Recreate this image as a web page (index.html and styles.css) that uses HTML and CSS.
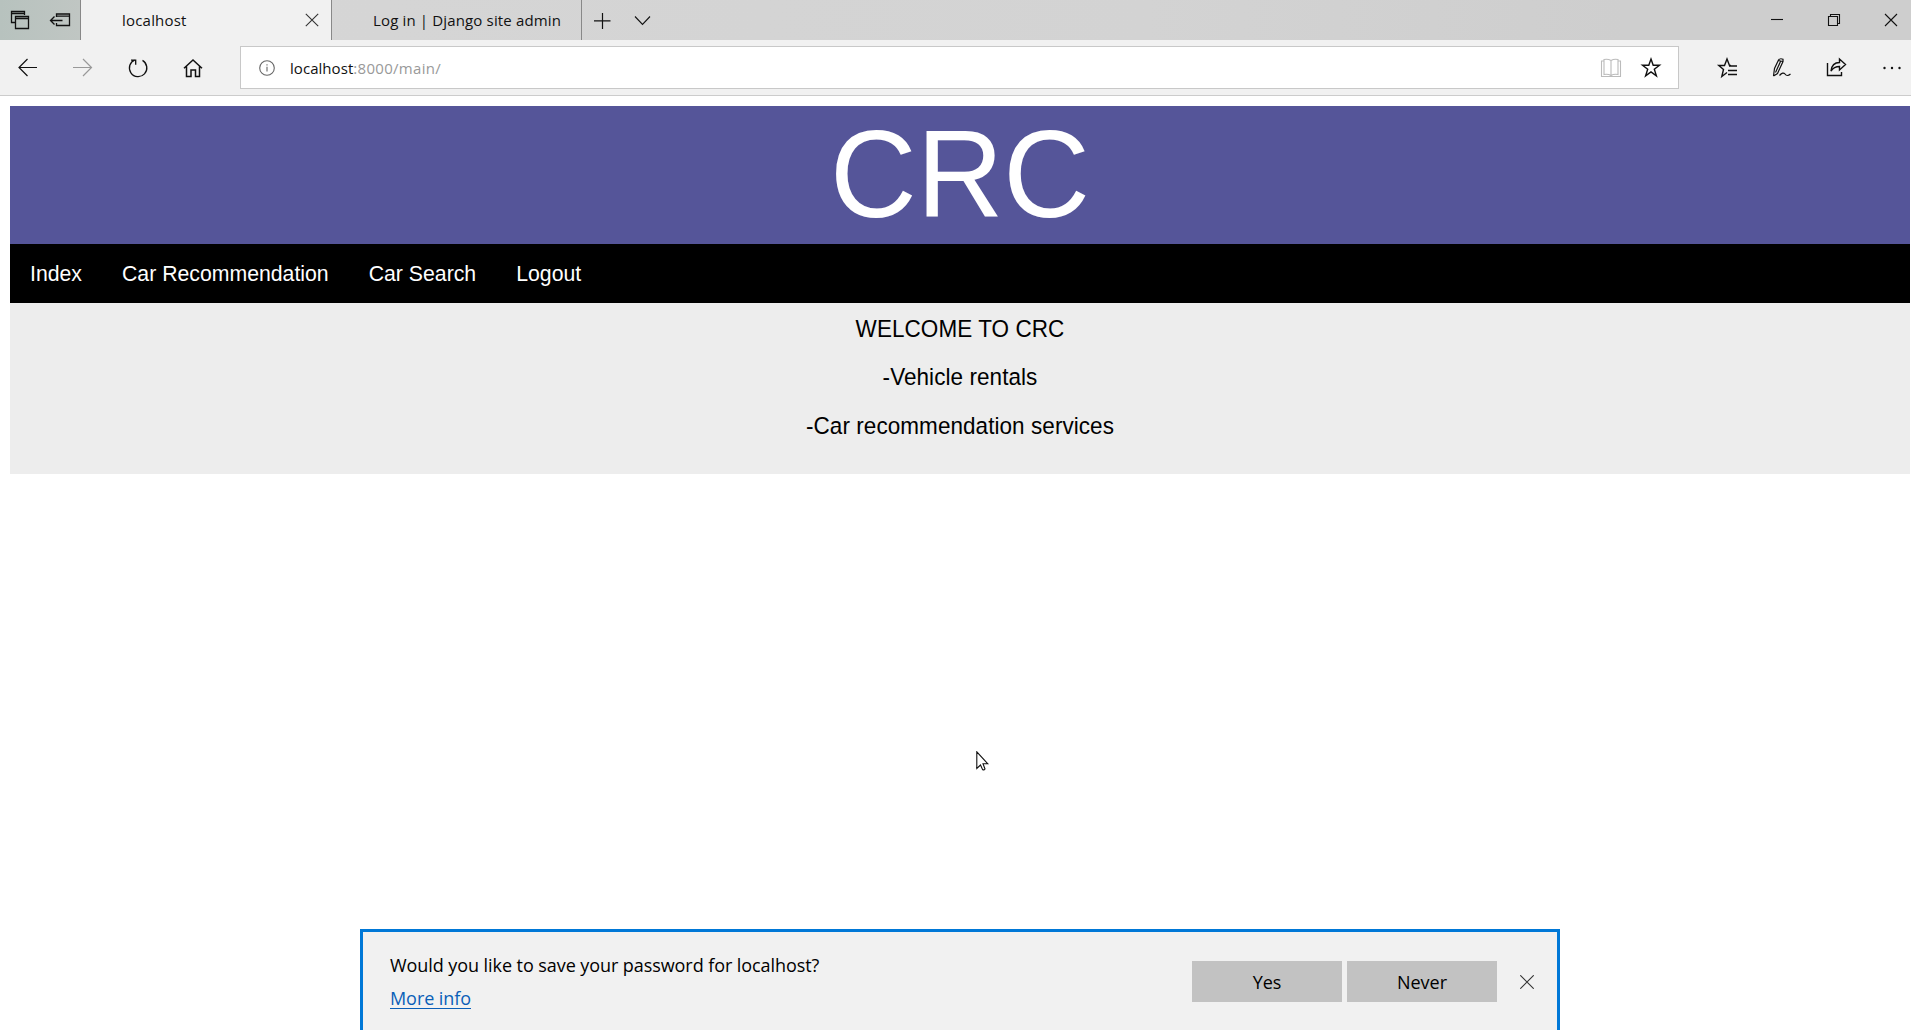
FILE: index.html
```html
<!DOCTYPE html>
<html lang="en">
<head>
<meta charset="utf-8">
<title>localhost</title>
<link rel="stylesheet" href="styles.css">
</head>
<body>
<div class="browser">
  <div class="tabbar">
    <div class="tab-tools">
      <svg width="40" height="40" viewBox="0 0 40 40"><path d="M15 22.500H11.500V11.500H24.500V15M11.500 13.500H24.500M15.500 16.500H28.500V28.500H15.500ZM15.500 18.500H28.500" stroke-width="1.300"/></svg>
      <svg width="40" height="40" viewBox="0 0 40 40"><path d="M16.500 17V14H29.500V25.500H16.500V23M16.500 16.200H29.500M22.500 20.500H10.500M14.500 16.500L10.500 20.500L14.500 24.500" stroke-width="1.300"/></svg>
    </div>
    <div class="tab active"><span>localhost</span>
      <svg class="tab-close" width="14" height="14" viewBox="0 0 14 14"><path d="M.8.800L13.200 13.200M13.200.800L.800 13.200"/></svg>
    </div>
    <div class="tab idle"><span>Log in | Django site admin</span></div>
    <svg width="40" height="40" viewBox="0 0 40 40"><path d="M12 20.800H28.500M20.500 13V29" stroke-width="1.200"/></svg>
    <svg width="40" height="40" viewBox="0 0 40 40"><path d="M13 16.500L20.500 24.500L28 16.500"/></svg>
    <div class="window-controls">
      <svg width="57" height="40" viewBox="0 0 57 40"><path d="M23 19.500H35"/></svg>
      <svg width="57" height="40" viewBox="0 0 57 40"><path d="M23.500 16.500H32.500V25.500H23.500ZM25.500 16V14.500H34.500V23.500H33"/></svg>
      <svg width="57" height="40" viewBox="0 0 57 40"><path d="M23 14L35 26M35 14L23 26"/></svg>
    </div>
  </div>

  <div class="toolbar">
    <svg width="55" height="55" viewBox="0 0 55 55"><path d="M37 27.500H18.800M27.500 19L19 27.500L27.500 36" stroke-width="1.200"/></svg>
    <svg class="disabled" width="55" height="55" viewBox="0 0 55 55"><path d="M18 27.500H36.500M28 19L36.500 27.500L28 36" stroke-width="1.200"/></svg>
    <svg width="55" height="55" viewBox="0 0 55 55"><path d="M32.500 20.400A8.700 8.700 0 1 1 25 19.800M21 20.200H25.700V24.800" stroke-width="1.300"/></svg>
    <svg width="55" height="55" viewBox="0 0 55 55"><path d="M19 28.300L28 20L37 28.300M21.500 26.500V36.500H26V30H30.500V36.500H34.500V26.500" stroke-width="1.500"/></svg>
    <div class="address">
      <svg width="16" height="16" viewBox="0 0 16 16" class="info"><circle cx="8" cy="8" r="7.300"/><path d="M8 6.800V11.500M8 4.200V5.500"/></svg>
      <div class="url">localhost<span>:8000/main/</span></div>
      <svg class="reader" width="40" height="42" viewBox="0 0 40 42"><path d="M20 13.500C17.500 12 15.500 12 13 12.500V27.500C15.500 27 17.500 27 20 28.500C22.500 27 24.500 27 27 27.500V12.500C24.500 12 22.500 12 20 13.500V28.500M13 14H10.500V29.500H29.500V14H27"/></svg>
      <svg class="star" width="40" height="42" viewBox="0 0 40 42"><path d="M20 12L22.200 18.300H28.500L23.300 22.300L25.400 28.900L20 24.900L14.600 28.900L16.700 22.300L11.500 18.300H17.800Z" stroke-width="1.400"/></svg>
    </div>
    <div class="actions">
      <svg width="55" height="55" viewBox="0 0 55 55"><path d="M31 25.500H29.500L27 19L24.500 25.500H18.800L23.500 29.500L21.800 36.500L27 32.500M29 26H37M28 30.500H37M28 34.500H37" stroke-width="1.400"/></svg>
      <svg width="55" height="55" viewBox="0 0 55 55"><path d="M18.500 36L19.500 28.500L23.500 20Q25 18 28 19.200V21.500L22.500 33.500L18.500 36M23.500 20.500L27.500 21.500M25.500 21.500L20.500 32.500M24.500 35.500Q28 31.500 30 34Q32 37 35.500 34" stroke-width="1.200"/></svg>
      <svg width="55" height="55" viewBox="0 0 55 55"><path d="M17.500 23V35.500H31.500V32M21 31Q22 22.500 29.500 22.500V19L35.500 24.500L29.500 30V26.500Q24 26.500 21 31Z" stroke-width="1.400"/></svg>
      <svg width="46" height="55" viewBox="0 0 46 55"><g class="dots"><circle cx="19.500" cy="28" r="1.200"/><circle cx="27" cy="28" r="1.200"/><circle cx="34.500" cy="28" r="1.200"/></g></svg>
    </div>
  </div>

  <main class="page">
    <header class="banner"><span>CRC</span></header>
    <nav class="nav"><a>Index</a><a>Car Recommendation</a><a>Car Search</a><a>Logout</a></nav>
    <section class="welcome">
      <p>WELCOME TO CRC</p>
      <p>-Vehicle rentals</p>
      <p>-Car recommendation services</p>
    </section>
  </main>

  <div class="password-bar">
    <div class="message"><div class="question">Would you like to save your password for localhost?</div><a>More info</a></div>
    <button>Yes</button>
    <button>Never</button>
    <svg width="14" height="14" viewBox="0 0 14 14"><path d="M.3.300L13.700 13.700M13.700.300L.3 13.700"/></svg>
  </div>
  <svg class="cursor" width="14" height="21" viewBox="0 0 14 21"><path d="M.8.800V17.500L4.500 14L6.500 18.500Q8 19.500 9 18L7 12.800H11.800Z"/></svg>
</div>
</body>
</html>
```
FILE: styles.css
```css
* { box-sizing: border-box; }
body { margin: 0; overflow: hidden; background: #fff; }
svg { display: block; flex: none; fill: none; stroke: #111; stroke-width: 1.1; }

.browser {
  position: relative;
  display: flex;
  flex-direction: column;
  width: 100%;
  height: 100vh;
  font: 15px "Open Sans", "Noto Sans", sans-serif;
  color: #111;
}

.tabbar { display: flex; height: 40px; background: linear-gradient(90deg, #d6d6d6, #d3d3d3 60%, #cecece 85%, #cecece); }
.tab-tools { display: flex; width: 80px; background: linear-gradient(90deg, #b7c2be, #c0c6c3); }
.tab { display: flex; align-items: center; line-height: 40px; border-left: 1px solid #888; }
.active { width: 251px; padding: 0 12px 0 41px; background: #f1f1f1; justify-content: space-between; letter-spacing: .2px; }
.idle { width: 251px; padding-left: 41px; border-right: 1px solid #888; letter-spacing: .15px; white-space: nowrap; }
.tab-close { stroke: #333; }
.window-controls { display: flex; margin-left: auto; margin-right: -8px; }

.toolbar { display: flex; align-items: center; height: 56px; background: #f1f1f1; border-bottom: 1px solid #ccc; }
.disabled { stroke: #999; }
.address { display: flex; align-items: center; width: 1439px; height: 43px; margin-left: 20px; padding-left: 18px; background: #fff; border: 1px solid #c8c8c8; }
.info { stroke: #666; }
.url { margin-left: 15px; margin-right: auto; letter-spacing: .05px; }
.url span { color: #999; letter-spacing: .3px; }
.reader { stroke: #bbb; }
.star { margin-right: 7px; }
.actions { display: flex; margin-left: 21px; }
.dots { fill: #111; stroke: none; }

.page { padding: 10px 1px 0 10px; font-family: "Liberation Sans", Arial, sans-serif; }
.banner { height: 138px; background: #555599; color: #fff; font-size: 120px; line-height: 138px; text-align: center; }
.banner span { display: inline-block; transform: scaleY(1.04); transform-origin: 50% 111px; }
.nav { display: flex; height: 59px; background: #000; color: #fff; font-size: 21.25px; line-height: 60px; }
.nav a { padding: 0 20px; }
.welcome { height: 171px; padding-top: 13.5px; background: #ededed; color: #000; font-size: 22.5px; line-height: 26px; letter-spacing: .06px; text-align: center; }
.welcome p { margin: 0 0 22.5px; transform: scaleY(1.06); transform-origin: 50% 21px; }

.password-bar {
  display: flex;
  align-items: flex-start;
  width: 1200px;
  height: 101px;
  margin: auto auto 0 360px;
  padding: 20px 23px 0 27px;
  background: #f1f1f1;
  border: 3px solid #0078d7;
  border-bottom: 0;
  font-size: 18px;
  color: #000;
}
.message { margin: -1px auto 0 0; line-height: 28px; letter-spacing: -.07px; }
.question { margin-bottom: 5px; }
.message a { color: #0a5fb8; text-decoration: underline; text-underline-offset: 3px; }
.password-bar button { width: 150px; height: 41px; margin: 9px 5px 0 0; padding: 0; border: 0; background: #c2c2c2; color: #000; font: inherit; }
.password-bar svg { margin: 23px 0 0 18px; stroke: #333; }
.cursor { position: absolute; left: 976px; top: 751px; fill: #fff; }
```
